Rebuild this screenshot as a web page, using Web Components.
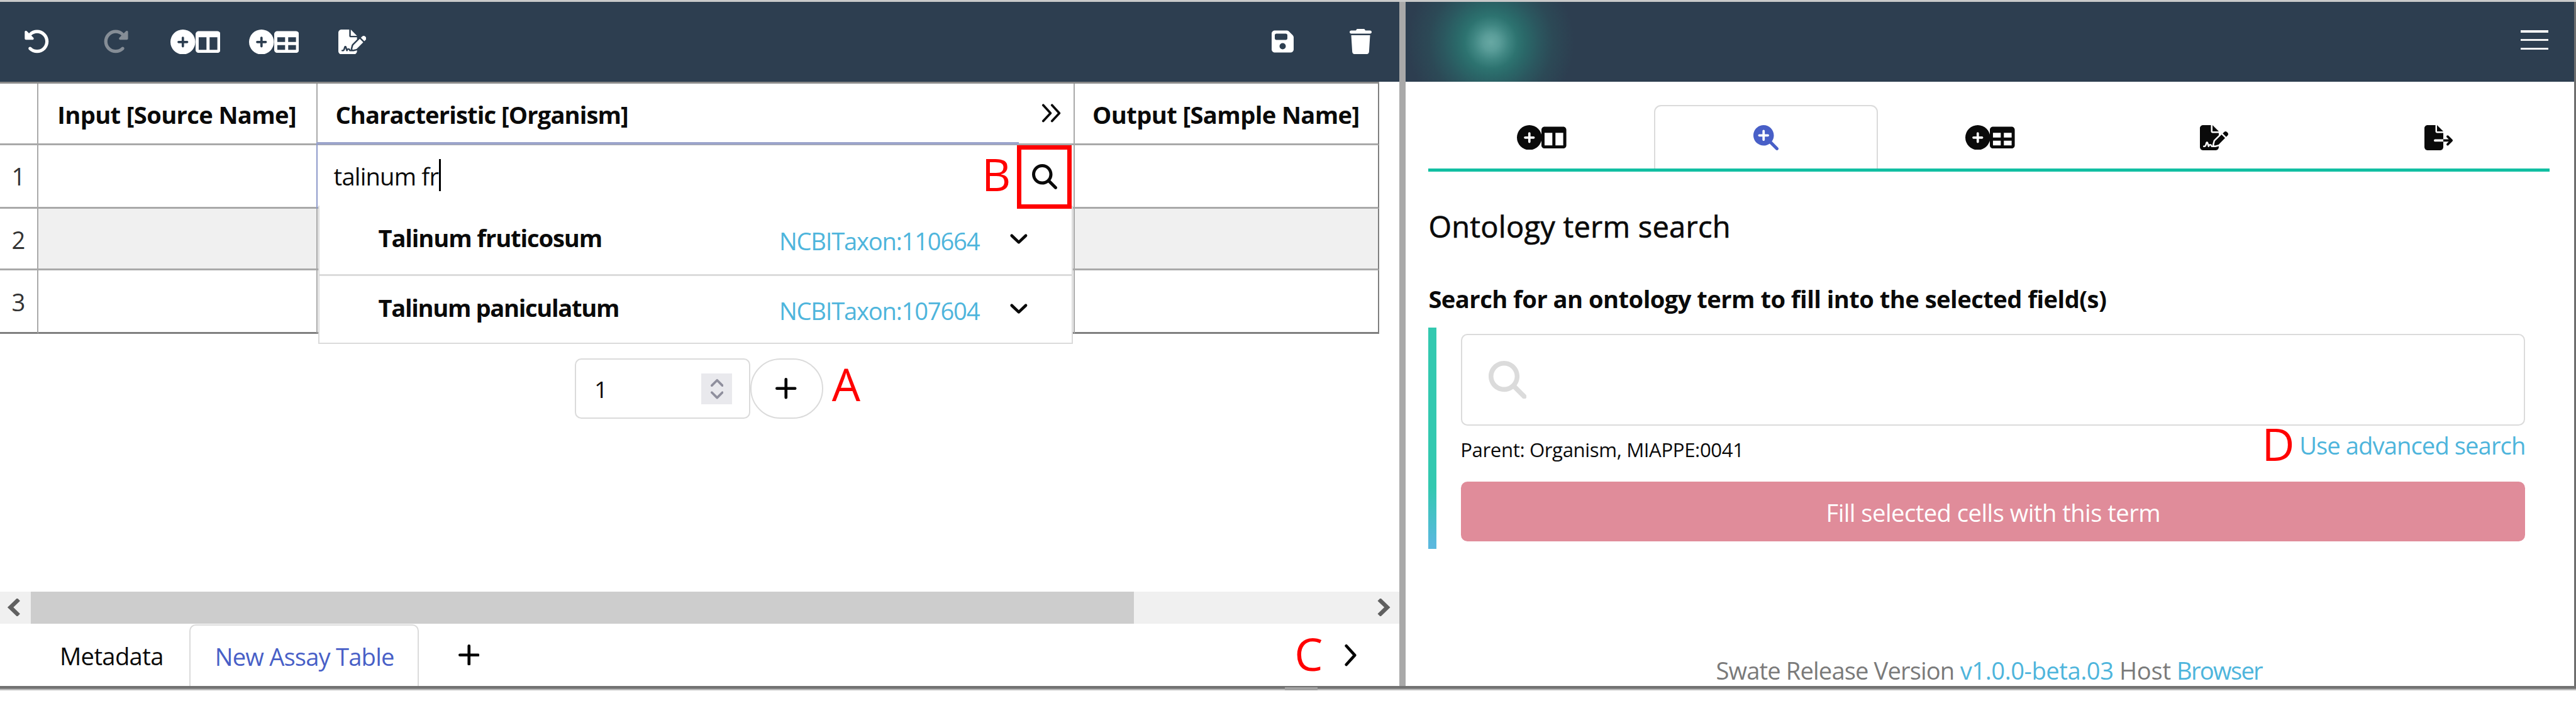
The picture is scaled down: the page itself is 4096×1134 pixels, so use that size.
<!DOCTYPE html>
<html lang="en">
<head>
<meta charset="utf-8">
<title>Swate</title>
<style>
html,body{margin:0;background:#fff;overflow:hidden;width:100%;height:100%}
body{font-family:"Open Sans","Noto Sans",sans-serif;color:#0a0a0a}
</style>
</head>
<body>
<swate-app></swate-app>
<script>
const P={
undo:[512,'M48.5 224H40c-13.3 0-24-10.7-24-24V72c0-9.7 5.8-18.5 14.8-22.2s19.3-1.7 26.2 5.2L98.6 96.6c87.6-86.5 228.7-86.2 315.8 1c87.5 87.5 87.5 229.3 0 316.8s-229.3 87.5-316.8 0c-12.5-12.5-12.5-32.8 0-45.3s32.8-12.5 45.3 0c62.5 62.5 163.8 62.5 226.3 0s62.5-163.8 0-226.3c-62.2-62.2-162.7-62.5-225.3-1L185 183c6.9 6.9 8.9 17.2 5.2 26.2s-12.5 14.8-22.2 14.8H48.5z'],
circle:[512,'M256 512A256 256 0 1 0 256 0a256 256 0 1 0 0 512zM232 344V280H168c-13.3 0-24-10.7-24-24s10.7-24 24-24h64V168c0-13.3 10.7-24 24-24s24 10.7 24 24v64h64c13.3 0 24 10.7 24 24s-10.7 24-24 24H280v64c0 13.3-10.7 24-24 24s-24-10.7-24-24z'],
columns:[512,'M0 96C0 60.7 28.7 32 64 32H448c35.3 0 64 28.7 64 64V416c0 35.3-28.7 64-64 64H64c-35.3 0-64-28.7-64-64V96zm64 64V416H224V160H64zm384 0H288V416H448V160z'],
table:[512,'M64 256V160H224v96H64zm0 64H224v96H64V320zm224 96V320H448v96H288zM448 256H288V160H448v96zM64 32C28.7 32 0 60.7 0 96V416c0 35.3 28.7 64 64 64H448c35.3 0 64-28.7 64-64V96c0-35.3-28.7-64-64-64H64z'],
sign:[576,'M64 0C28.7 0 0 28.7 0 64V448c0 35.3 28.7 64 64 64H320c35.3 0 64-28.7 64-64V428.7c-2.7 1.1-5.4 2-8.2 2.7l-60.1 15c-3 .7-6 1.2-9 1.4c-.9 .1-1.8 .2-2.7 .2H240c-6.1 0-11.6-3.4-14.3-8.8l-8.8-17.7c-1.7-3.4-5.1-5.5-8.8-5.5s-7.2 2.1-8.8 5.5l-8.8 17.7c-2.9 5.9-9.2 9.4-15.7 8.8s-12.1-5.1-13.9-11.3L144 381l-9.8 32.8c-6.1 20.3-24.8 34.2-46 34.2H80c-8.8 0-16-7.2-16-16s7.2-16 16-16h8.2c7.1 0 13.3-4.6 15.3-11.4l14.9-49.5c3.4-11.3 13.8-19.1 25.6-19.1s22.2 7.7 25.6 19.1l11.6 38.6c7.4-6.2 16.8-9.7 26.8-9.7c15.9 0 30.4 9 37.5 23.2l4.4 8.8h8.9c-3.1-8.8-3.7-18.4-1.4-27.8l15-60.1c2.8-11.3 8.6-21.5 16.8-29.7L384 203.6V160H256c-17.7 0-32-14.3-32-32V0H64zM256 0V128H384L256 0zM549.8 139.7c-15.6-15.6-40.9-15.6-56.6 0l-29.4 29.4 71 71 29.4-29.4c15.6-15.6 15.6-40.9 0-56.6l-14.4-14.4zM311.9 321c-4.1 4.1-7 9.2-8.4 14.9l-15 60.1c-1.4 5.5 .2 11.2 4.2 15.2s9.7 5.6 15.2 4.2l60.1-15c5.6-1.4 10.8-4.3 14.9-8.4L512.1 262.7l-71-71L311.9 321z'],
exp:[576,'M0 64C0 28.7 28.7 0 64 0H224V128c0 17.7 14.3 32 32 32H384V288H216c-13.3 0-24 10.7-24 24s10.7 24 24 24H384V448c0 35.3-28.7 64-64 64H64c-35.3 0-64-28.7-64-64V64zM384 336V288H494.1l-39-39c-9.4-9.4-9.4-24.6 0-33.9s24.6-9.4 33.9 0l80 80c9.4 9.4 9.4 24.6 0 33.9l-80 80c-9.4 9.4-24.6 9.4-33.9 0s-9.4-24.6 0-33.9l39-39H384zm0-208H256V0L384 128z'],
save:[448,'M64 32C28.7 32 0 60.7 0 96V416c0 35.3 28.7 64 64 64H384c35.3 0 64-28.7 64-64V173.3c0-17-6.7-33.3-18.7-45.3L352 50.7C340 38.7 323.7 32 306.7 32H64zm0 96c0-17.7 14.3-32 32-32H288c17.7 0 32 14.3 32 32v64c0 17.7-14.3 32-32 32H96c-17.7 0-32-14.3-32-32V128zM224 288a64 64 0 1 1 0 128 64 64 0 1 1 0-128z'],
trash:[448,'M135.2 17.7L128 32H32C14.3 32 0 46.3 0 64S14.3 96 32 96H416c17.7 0 32-14.3 32-32s-14.3-32-32-32H320l-7.2-14.3C307.4 6.8 296.3 0 284.2 0H163.8c-12.1 0-23.2 6.8-28.6 17.7zM416 128H32L53.2 467c1.6 25.3 22.6 45 47.9 45H346.9c25.3 0 46.3-19.7 47.9-45L416 128z'],
search:[512,'M416 208c0 45.9-14.9 88.3-40 122.7L502.6 457.4c12.5 12.5 12.5 32.8 0 45.3s-32.8 12.5-45.3 0L330.7 376c-34.4 25.2-76.8 40-122.7 40C93.1 416 0 322.9 0 208S93.1 0 208 0S416 93.1 416 208zM208 352a144 144 0 1 0 0-288 144 144 0 1 0 0 288z'],
zoomin:[512,'M416 208c0 45.9-14.9 88.3-40 122.7L502.6 457.4c12.5 12.5 12.5 32.8 0 45.3s-32.8 12.5-45.3 0L330.7 376c-34.4 25.2-76.8 40-122.7 40C93.1 416 0 322.9 0 208S93.1 0 208 0S416 93.1 416 208zM184 296c0 13.3 10.7 24 24 24s24-10.7 24-24V232h64c13.3 0 24-10.7 24-24s-10.7-24-24-24H232V120c0-13.3-10.7-24-24-24s-24 10.7-24 24v64H120c-13.3 0-24 10.7-24 24s10.7 24 24 24h64v64z']
};
// Stroked glyphs: view box width, height, stroke width, path
const S={
plus:[36,36,5,'M18 2.5V33.5M2.5 18H33.5'],
down:[32,20,5,'M4 4L16 15.5L28 4'],
right:[23,39,5,'M4 3.5L18.5 19.5L4 35.5'],
dbl:[34,32,4,'M3 2.5L15.5 16L3 29.5M18 2.5L30.5 16L18 29.5'],
left:[23,30,7,'M20 1.5L6 15L20 28.5'],
rgt:[23,30,7,'M3 1.5L17 15L3 28.5'],
spin:[22,38,4,'M2 13L11 4L20 13M2 25L11 34L20 25']
};
const def=(n,html,fn)=>customElements.define(n,class extends HTMLElement{
  connectedCallback(){
    if(!this.shadowRoot){this.attachShadow({mode:'open'}).innerHTML=typeof html==='function'?html(this):html}
    if(fn)fn(this);
  }
});
const a=(e,n,d)=>e.getAttribute(n)||d;

// Icon: "n" names the glyph, "h" its height in pixels
def('ui-icon',e=>{
  const n=a(e,'n'),h=+a(e,'h',42);
  if(P[n]){const w=h*P[n][0]/512;
    return `<style>:host{display:block;flex:none;width:${w}px;height:${h}px}svg{display:block;width:100%;height:100%}</style><svg viewBox="0 0 ${P[n][0]} 512" fill="currentColor"><path d="${P[n][1]}"/></svg>`}
  const s=S[n],butt=(n==='left'||n==='rgt');
  return `<style>:host{display:block;flex:none;width:${s[0]}px;height:${s[1]}px}svg{display:block;width:100%;height:100%}</style><svg viewBox="0 0 ${s[0]} ${s[1]}" fill="none" stroke="currentColor" stroke-width="${s[2]}" stroke-linecap="${butt?'butt':'round'}" stroke-linejoin="${butt?'miter':'round'}"><path d="${s[3]}"/></svg>`;
});

// Label: one line of text, tracked so that it takes exactly "w" pixels at size "s"
def('ui-label',e=>`<style>:host{display:block;flex:none;width:${a(e,'w')}px;height:${a(e,'s',41)}px;font-size:${a(e,'s',41)}px;line-height:1;white-space:nowrap}span{display:inline-block}</style><span><slot></slot></span>`,e=>{
  const sp=e.shadowRoot.querySelector('span'),n=e.textContent.length;
  if(n<2)return;
  const hw=e.getBoundingClientRect().width,k=hw/+a(e,'w');
  sp.style.letterSpacing=((hw-sp.getBoundingClientRect().width)/k/n)+'px';
});

def('icon-pair',`<style>:host{display:flex;flex:none}</style><slot></slot>`);

def('main-toolbar',`<style>:host{display:flex;align-items:center;height:136.5px;background:#2d3e50;color:#fff;padding:0 47px 0 40.5px;box-sizing:border-box}
.redo{margin-left:90px;transform:scaleX(-1);color:#858d96}.g{margin-left:71px}.h{margin-left:49px}.f{margin-left:67px}.s{margin-left:auto}.t{margin-left:96px}</style>
<ui-icon n="undo" h="45"></ui-icon><ui-icon class="redo" n="undo" h="45"></ui-icon>
<icon-pair class="g"><ui-icon n="circle" h="42.5"></ui-icon><ui-icon n="columns" h="42.5"></ui-icon></icon-pair>
<icon-pair class="h"><ui-icon n="circle" h="42.5"></ui-icon><ui-icon n="table" h="42.5"></ui-icon></icon-pair>
<ui-icon class="f" n="sign" h="42.5"></ui-icon>
<ui-icon class="s" n="save" h="43"></ui-icon><ui-icon class="t" n="trash" h="43"></ui-icon>`);

def('term-option',e=>`<style>:host{display:flex;box-sizing:border-box;padding-left:100px;position:relative}.id{margin:5px 0 0 auto;color:#4eb5dc}.b{font-weight:700}ui-icon{margin:13px 75px 0 51px}</style>
<ui-label class="b" w="${a(e,'w')}">${a(e,'name')}</ui-label><ui-label class="id" w="342">${a(e,'term')}</ui-label><ui-icon n="down"></ui-icon>`);

def('term-dropdown',`<style>:host{display:block;position:absolute;left:1px;top:104px;width:1289px;height:236px;box-sizing:border-box;background:#fff;border:2.4px solid #dbdbdb;border-top:0;z-index:2}
.a{height:120px;padding-top:34px;border-bottom:3.3px solid #dbdbdb}.b{height:113px;padding-top:33.5px}</style>
<term-option class="a" w="382" name="Talinum fruticosum" term="NCBITaxon:110664"></term-option>
<term-option class="b" w="411" name="Talinum paniculatum" term="NCBITaxon:107604"></term-option>`);

def('annotation-table',`<style>:host{display:block;width:2356px;border-top:3.3px solid #8a8a8a;box-sizing:border-box}
.r{display:grid;grid-template-columns:66px 477px 1293px 520px}
.r>div{box-sizing:border-box;border-right:2.4px solid #a9a9a9;border-bottom:3.3px solid #a9a9a9;display:flex;align-items:center;position:relative}
.r>div:last-child{border-right-color:#808080}
.h>div{height:105px;font-weight:700;padding-top:3px}.r1>div{height:109px}.r2>div{height:105.5px}.r3>div{height:108px;border-bottom-color:#7f7f7f}
.r2 .n,.r3 .n{padding-top:2px}
.n{padding-left:20px}.n ui-label{color:#333}
.r2>div+div{background:#f0f0f0}
.edit{background:#fff}
.edit .q{margin-left:27px}
.focus{position:absolute;left:-2.4px;top:-4.5px;width:1200px;height:114px;box-sizing:border-box;border-left:2.4px solid #8f9bcb;border-top:4.4px solid #9ba4cb}
.caret{width:2.6px;height:55px;background:#000;margin:-2px 0 0 1px}
.red{position:absolute;left:1194px;top:0;width:94px;height:109px;box-sizing:border-box;border:7.6px solid #f00;display:flex;align-items:center;justify-content:center;z-index:3}
.dbl{margin:-3px 21px 0 auto}
.mark{position:absolute;left:1134px;top:11px;color:#f00;z-index:3}
</style>
<div class="r h"><div></div><div style="padding-left:32px"><ui-label w="408">Input [Source Name]</ui-label></div><div style="padding-left:30px"><ui-label w="500">Characteristic [Organism]</ui-label><ui-icon class="dbl" n="dbl"></ui-icon></div><div style="padding-left:30px"><ui-label w="456">Output [Sample Name]</ui-label></div></div>
<div class="r r1"><div class="n"><ui-label w="24">1</ui-label></div><div></div><div class="edit"><div class="focus"></div><ui-label class="q" w="179">talinum fr</ui-label><div class="caret"></div><ui-label class="mark" w="50" s="77">B</ui-label><div class="red"><ui-icon n="search" h="43"></ui-icon></div><term-dropdown></term-dropdown></div><div></div></div>
<div class="r r2"><div class="n"><ui-label w="24">2</ui-label></div><div></div><div></div><div></div></div>
<div class="r r3"><div class="n"><ui-label w="24">3</ui-label></div><div></div><div></div><div></div></div>`);

def('row-stepper',`<style>:host{display:flex;align-items:flex-start;padding:42px 0 0 982px;flex:1}
.in{width:300px;height:103px;box-sizing:border-box;border:2.4px solid #dbdbdb;border-radius:11px;display:flex;align-items:center;padding:0 29px 0 31px;justify-content:space-between;padding-top:2px}
.sp{width:53px;height:53px;background:#e9e9ed;color:#8f8f9d;display:flex;align-items:center;justify-content:center}
.add{width:124px;height:103px;box-sizing:border-box;border:2.4px solid #dbdbdb;border-radius:52px;display:flex;align-items:center;justify-content:center;color:#000;padding-right:2px}
.m{margin:6px 0 0 15px;color:#f00}</style>
<div class="in"><ui-label w="24" s="40">1</ui-label><div class="sp"><ui-icon n="spin"></ui-icon></div></div><div class="add"><ui-icon n="plus"></ui-icon></div><ui-label class="m" w="50" s="77">A</ui-label>`);

def('scroll-bar',`<style>:host{display:flex;align-items:center;height:55px;background:#f0f0f0;color:#606060}
.l{margin:0 18px 0 12px}.thumb{width:1884px;height:55px;background:#cdcdcd}.r{margin:0 15px 0 auto}</style>
<ui-icon class="l" n="left"></ui-icon><div class="thumb"></div><ui-icon class="r" n="rgt"></ui-icon>`);

def('sheet-tabs',`<style>:host{display:flex;height:107px;align-items:center}
.m{margin-left:102px;margin-top:3px}.t{margin-left:44px;width:392px;height:106px;align-self:flex-end;box-sizing:border-box;border:2.4px solid #dbdbdb;border-bottom:0;border-radius:11px 11px 0 0;display:flex;align-items:center;padding:1.5px 0 0 42px;color:#485fc7;background:#fff}
.p{margin-left:68px;color:#000}.c{margin:-3px 0 0 auto;color:#f00}.r{margin:0 71px 0 28px;color:#000}</style>
<ui-label class="m" w="177">Metadata</ui-label><div class="t"><ui-label w="306">New Assay Table</ui-label></div><ui-icon class="p" n="plus"></ui-icon><ui-label class="c" w="57" s="77">C</ui-label><ui-icon class="r" n="right"></ui-icon>`);

def('nav-tabs',`<style>:host{display:grid;grid-template-columns:repeat(5,1fr);height:114px;margin-top:40px;border-bottom:6px solid #11bfa2;box-sizing:border-box}
div{display:flex;align-items:center;justify-content:center;box-sizing:border-box;padding:2px 0 0 3px}.on{border:2.4px solid #dbdbdb;border-bottom:0;border-radius:12px 12px 0 0;color:#485fc7;padding:0;margin:0 -2px 0 2px}</style>
<div><ui-icon n="circle" h="42.5"></ui-icon><ui-icon n="columns" h="42.5"></ui-icon></div>
<div class="on"><ui-icon n="zoomin" h="43"></ui-icon></div>
<div><ui-icon n="circle" h="42.5"></ui-icon><ui-icon n="table" h="42.5"></ui-icon></div>
<div><ui-icon n="sign" h="43"></ui-icon></div>
<div><ui-icon n="exp" h="43"></ui-icon></div>`);

def('side-header',`<style>:host{display:flex;justify-content:flex-end;height:136.5px;padding-right:44px;box-sizing:border-box;background:radial-gradient(circle at 147px 69px,#67a8a3 0,#5a9d99 14px,#3f8682 30px,#2d7370 45px,#2a6768 60px,#2b575f 82px,#2c4956 106px,#2d3e50 142px)}
.b{width:48px;height:33px;margin-top:49px;display:flex;flex-direction:column;justify-content:space-between}.b i{height:3.5px;background:#f4f4f4}</style>
<div class="b"><i></i><i></i><i></i></div>`);

def('term-search',`<style>:host{display:flex;height:378px;margin-top:29px}
.bar{width:13.5px;background:linear-gradient(#33c9b0 0,#33c9b0 72%,#5ab8de 98%)}
.body{margin-left:42px;width:1818px;padding-top:11px;display:flex;flex-direction:column}
.in{height:157px;box-sizing:border-box;border:2.4px solid #dbdbdb;border-radius:11px;display:flex;align-items:center;padding-left:45px;color:#dbdbdb}
.row{display:flex;height:96px}.p{margin:25px 0 0 -1px}.d{margin:-8px 0 0 auto;color:#f00}.u{margin:12.5px 0 0 9px;color:#4eb5dc}
.btn{height:102px;border-radius:11px;background:#e08c9a;color:#fff;display:flex;align-items:center;justify-content:center;padding-top:2px;box-sizing:border-box}</style>
<div class="bar"></div><div class="body"><div class="in"><ui-icon n="search" h="65"></ui-icon></div>
<div class="row"><ui-label class="p" w="484" s="33.5">Parent: Organism, MIAPPE:0041</ui-label><ui-label class="d" w="55" s="77">D</ui-label><ui-label class="u" w="386">Use advanced search</ui-label></div>
<div class="btn"><ui-label w="571">Fill selected cells with this term</ui-label></div></div>`);

def('app-footer',`<style>:host{display:flex;justify-content:center;gap:10px;margin-top:187px;color:#7a7a7a}.l{color:#4eb5dc}</style>
<ui-label w="407">Swate Release Version</ui-label><ui-label class="l" w="262">v1.0.0-beta.03</ui-label><ui-label w="88">Host</ui-label><ui-label class="l" w="146">Browser</ui-label>`);

def('side-panel',`<style>:host{display:block;width:1997px;flex:none}.c{padding:0 42px 0 40px}.h{margin-top:69px;-webkit-text-stroke:.7px currentColor}.s{margin-top:76.5px;font-weight:700}</style>
<side-header></side-header><div class="c"><nav-tabs></nav-tabs>
<ui-label class="h" w="516" s="50.5">Ontology term search</ui-label>
<ui-label class="s" w="1158">Search for an ontology term to fill into the selected field(s)</ui-label>
<term-search></term-search><app-footer></app-footer></div>`);

def('table-pane',`<style>:host{display:flex;flex-direction:column;width:2390px;flex:none}</style>
<main-toolbar></main-toolbar><annotation-table></annotation-table><row-stepper></row-stepper><scroll-bar></scroll-bar><sheet-tabs></sheet-tabs>`);

def('swate-app',`<style>:host{display:block;width:4400px;height:1218px;zoom:.930909;overflow:hidden;background:#fff}
.top{height:3px;background:#c9c9c9}.m{display:flex;height:1169.5px}.d{width:10.5px;flex:none;background:#a9a9a9;margin-right:-.5px;z-index:1}.e{width:3px;background:#6e6e6e}
.bot{height:7px;background:linear-gradient(#727272 0 60%,#bdbdbd 70%);display:flex}.k{margin:2px 0 0 2195px;width:55px;height:5px;background:#a2a2a2}</style>
<div class="top"></div><div class="m"><table-pane></table-pane><div class="d"></div><side-panel></side-panel><div class="e"></div></div><div class="bot"><div class="k"></div></div>`);
</script>
</body>
</html>
